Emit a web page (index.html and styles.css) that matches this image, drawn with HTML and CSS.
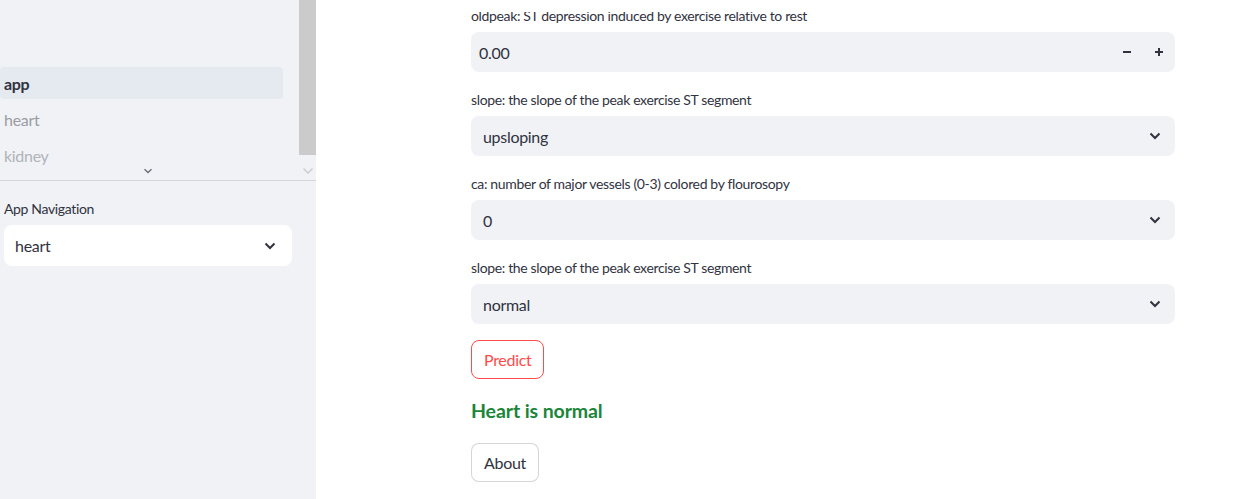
FILE: index.html
```html
<!DOCTYPE html>
<html lang="en">
<head>
<meta charset="utf-8">
<title>Heart</title>
<link rel="stylesheet" href="styles.css">
</head>
<body>
<div class="app">
  <aside class="sidebar">
    <div class="nav-wrap">
      <div class="nav-list">
        <div class="nav-item active">app</div>
        <div class="nav-item">heart</div>
        <div class="nav-item faded">kidney</div>
        <div class="nav-more">
          <svg width="10" height="6" viewBox="0 0 10 6"><path d="M1.5 1.2 5 4.5 8.5 1.2" fill="none" stroke="#6d6f78" stroke-width="1.4"/></svg>
        </div>
      </div>
      <div class="scrollbar">
        <div class="thumb"></div>
        <div class="arrow">
          <svg width="12" height="8" viewBox="0 0 12 8"><path d="M1.5 1.5 6 6 10.5 1.5" fill="none" stroke="#c9cacd" stroke-width="1.3"/></svg>
        </div>
      </div>
    </div>
    <div class="side-section">
      <div class="label">App Navigation</div>
      <div class="select white">
        <span>heart</span>
        <svg class="chev" width="12" height="8" viewBox="0 0 12 8"><path d="M1.5 1.5 6 6 10.5 1.5" fill="none" stroke="#31333f" stroke-width="2"/></svg>
      </div>
    </div>
  </aside>
  <main class="main">
    <div class="top-fade"></div>
    <div class="content">
      <div class="widget">
        <div class="label">oldpeak: ST depression induced by exercise relative to rest</div>
        <div class="number">
          <span class="value num">0.00</span>
          <div class="step">
            <svg width="10" height="10" viewBox="0 0 10 10"><path d="M1 5h8" stroke="#31333f" stroke-width="2"/></svg>
          </div>
          <div class="step">
            <svg width="10" height="10" viewBox="0 0 10 10"><path d="M1 5h8M5 1v8" stroke="#31333f" stroke-width="2"/></svg>
          </div>
        </div>
      </div>
      <div class="widget">
        <div class="label">slope: the slope of the peak exercise ST segment</div>
        <div class="select">
          <span>upsloping</span>
          <svg class="chev" width="12" height="8" viewBox="0 0 12 8"><path d="M1.5 1.5 6 6 10.5 1.5" fill="none" stroke="#31333f" stroke-width="2"/></svg>
        </div>
      </div>
      <div class="widget">
        <div class="label">ca: number of major vessels (0-3) colored by flourosopy</div>
        <div class="select">
          <span>0</span>
          <svg class="chev" width="12" height="8" viewBox="0 0 12 8"><path d="M1.5 1.5 6 6 10.5 1.5" fill="none" stroke="#31333f" stroke-width="2"/></svg>
        </div>
      </div>
      <div class="widget">
        <div class="label">slope: the slope of the peak exercise ST segment</div>
        <div class="select">
          <span>normal</span>
          <svg class="chev" width="12" height="8" viewBox="0 0 12 8"><path d="M1.5 1.5 6 6 10.5 1.5" fill="none" stroke="#31333f" stroke-width="2"/></svg>
        </div>
      </div>
      <div class="row"><button class="btn primary">Predict</button></div>
      <div class="result">Heart is normal</div>
      <div class="row"><button class="btn">About</button></div>
    </div>
  </main>
</div>
</body>
</html>
```

FILE: styles.css
```css
* { box-sizing: border-box; }
html, body { margin: 0; padding: 0; }
body {
  font-family: Lato, "Noto Sans", sans-serif;
  color: #31333f;
  background: #ffffff;
  width: 1237px;
  height: 499px;
  overflow: hidden;
  letter-spacing: -0.3px;
}
.app {
  display: flex;
  height: 499px;
}
.sidebar {
  width: 316px;
  flex: none;
  background: #f0f2f6;
  display: flex;
  flex-direction: column;
}
.nav-wrap {
  height: 181px;
  display: flex;
  border-bottom: 1px solid #d5d6db;
}
.nav-list {
  position: relative;
  flex: 1;
  padding: 67px 16px 0 0;
  display: flex;
  flex-direction: column;
  gap: 4px;
}
.nav-item {
  height: 32px;
  display: flex;
  align-items: center;
  padding-left: 4px;
  font-size: 16px;
  color: #9a9ca2;
  border-radius: 4px;
}
.nav-item.active {
  background: #e5e9f0;
  color: #31333f;
  font-weight: 700;
}
.nav-item.faded { color: #b1b3b8; }
.nav-more {
  position: absolute;
  left: 143px;
  top: 168px;
  line-height: 0;
}
.scrollbar {
  width: 17px;
  display: flex;
  flex-direction: column;
  background: #f1f2f5;
}
.thumb {
  height: 155px;
  background: #cbcbcb;
}
.arrow {
  display: flex;
  justify-content: center;
  padding-top: 12px;
}
.side-section {
  padding: 16px 24px 0 4px;
}
.label {
  height: 24px;
  line-height: 24px;
  font-size: 14px;
  letter-spacing: -0.35px;
  margin-bottom: 4px;
  white-space: nowrap;
}
.select {
  height: 40px;
  background: #f0f2f6;
  border-radius: 8px;
  display: flex;
  align-items: center;
  justify-content: space-between;
  padding: 0 14px 0 12px;
  font-size: 16px;
}
.select.white {
  background: #ffffff;
  height: 41px;
  padding: 0 16px 0 11px;
}
.main {
  position: relative;
  flex: 1;
  overflow: hidden;
}
.top-fade {
  position: absolute;
  left: 0;
  top: 0;
  right: 0;
  height: 12px;
  background: #ffffff;
  z-index: 2;
}
.content {
  width: 704px;
  margin-left: 155px;
  padding-top: 4px;
  display: flex;
  flex-direction: column;
  gap: 16px;
}
.number {
  height: 40px;
  background: #f0f2f6;
  border-radius: 8px;
  display: flex;
  align-items: center;
  padding-left: 8px;
  font-size: 16px;
}
.number .value { flex: 1; }
.step {
  width: 32px;
  height: 40px;
  display: flex;
  align-items: center;
  justify-content: center;
}
.row { display: flex; }
.btn {
  font-family: inherit;
  font-size: 16px;
  letter-spacing: -0.3px;
  height: 39px;
  padding: 0 12px;
  border-radius: 8px;
  background: #ffffff;
  border: 1px solid rgba(49, 51, 63, 0.2);
  color: #31333f;
}
.btn.primary {
  color: #ff4b4b;
  border-color: #ff4b4b;
}
.result {
  height: 32px;
  line-height: 32px;
  font-size: 19.5px;
  letter-spacing: -0.1px;
  font-weight: 700;
  color: #1b8539;
}
```
